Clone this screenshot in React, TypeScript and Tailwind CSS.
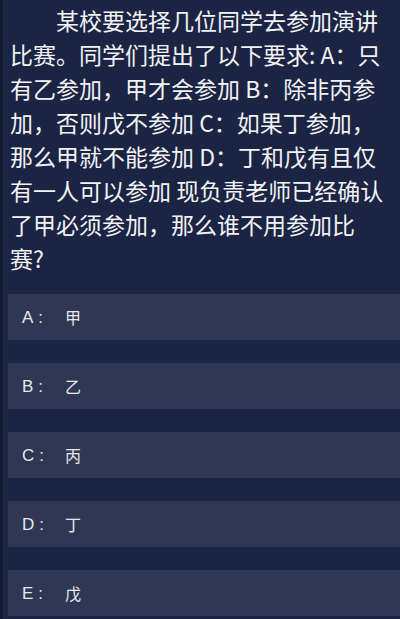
import React from 'react';

const lines = [
    '某校要选择几位同学去参加演讲',
    '比赛。同学们提出了以下要求: A：只',
    '有乙参加，甲才会参加 B：除非丙参',
    '加，否则戊不参加 C：如果丁参加，',
    '那么甲就不能参加 D：丁和戊有且仅',
    '有一人可以参加 现负责老师已经确认',
    '了甲必须参加，那么谁不用参加比',
    '赛?',
];

const options = [
    { key: 'A', value: '甲' },
    { key: 'B', value: '乙' },
    { key: 'C', value: '丙' },
    { key: 'D', value: '丁' },
    { key: 'E', value: '戊' },
];

const App: React.FC = () => {
    return (
        <div
            className="min-h-[619px] w-[400px] overflow-hidden bg-[#1c2443] border-l-[3px] border-[#131a34]"
            style={{ fontFamily: '"Noto Sans CJK SC", "Noto Sans", sans-serif' }}
        >
            {/* Question */}
            <div className="pl-[7px] pt-[3px] text-[23px] leading-[34px] text-[#f2f3f6]">
                {lines.map((line, i) => (
                    <div key={i} className={`whitespace-nowrap ${i === 0 ? 'pl-[46px]' : ''}`}>
                        {line}
                    </div>
                ))}
            </div>

            {/* Options */}
            <div className="mt-[19px] flex flex-col gap-[23px] pl-[5px]">
                {options.map((opt) => (
                    <div
                        key={opt.key}
                        className="h-[46px] flex items-center bg-[#2f3753] pl-[14px] text-[#e6e8ee]"
                    >
                        <span className="w-[43px] text-[17px] leading-none font-['Liberation_Sans',sans-serif]">
                            {opt.key}
                            <span className="ml-[5px]">:</span>
                        </span>
                        <span className="text-[16px] leading-none">{opt.value}</span>
                    </div>
                ))}
            </div>
        </div>
    );
};

export default App;
